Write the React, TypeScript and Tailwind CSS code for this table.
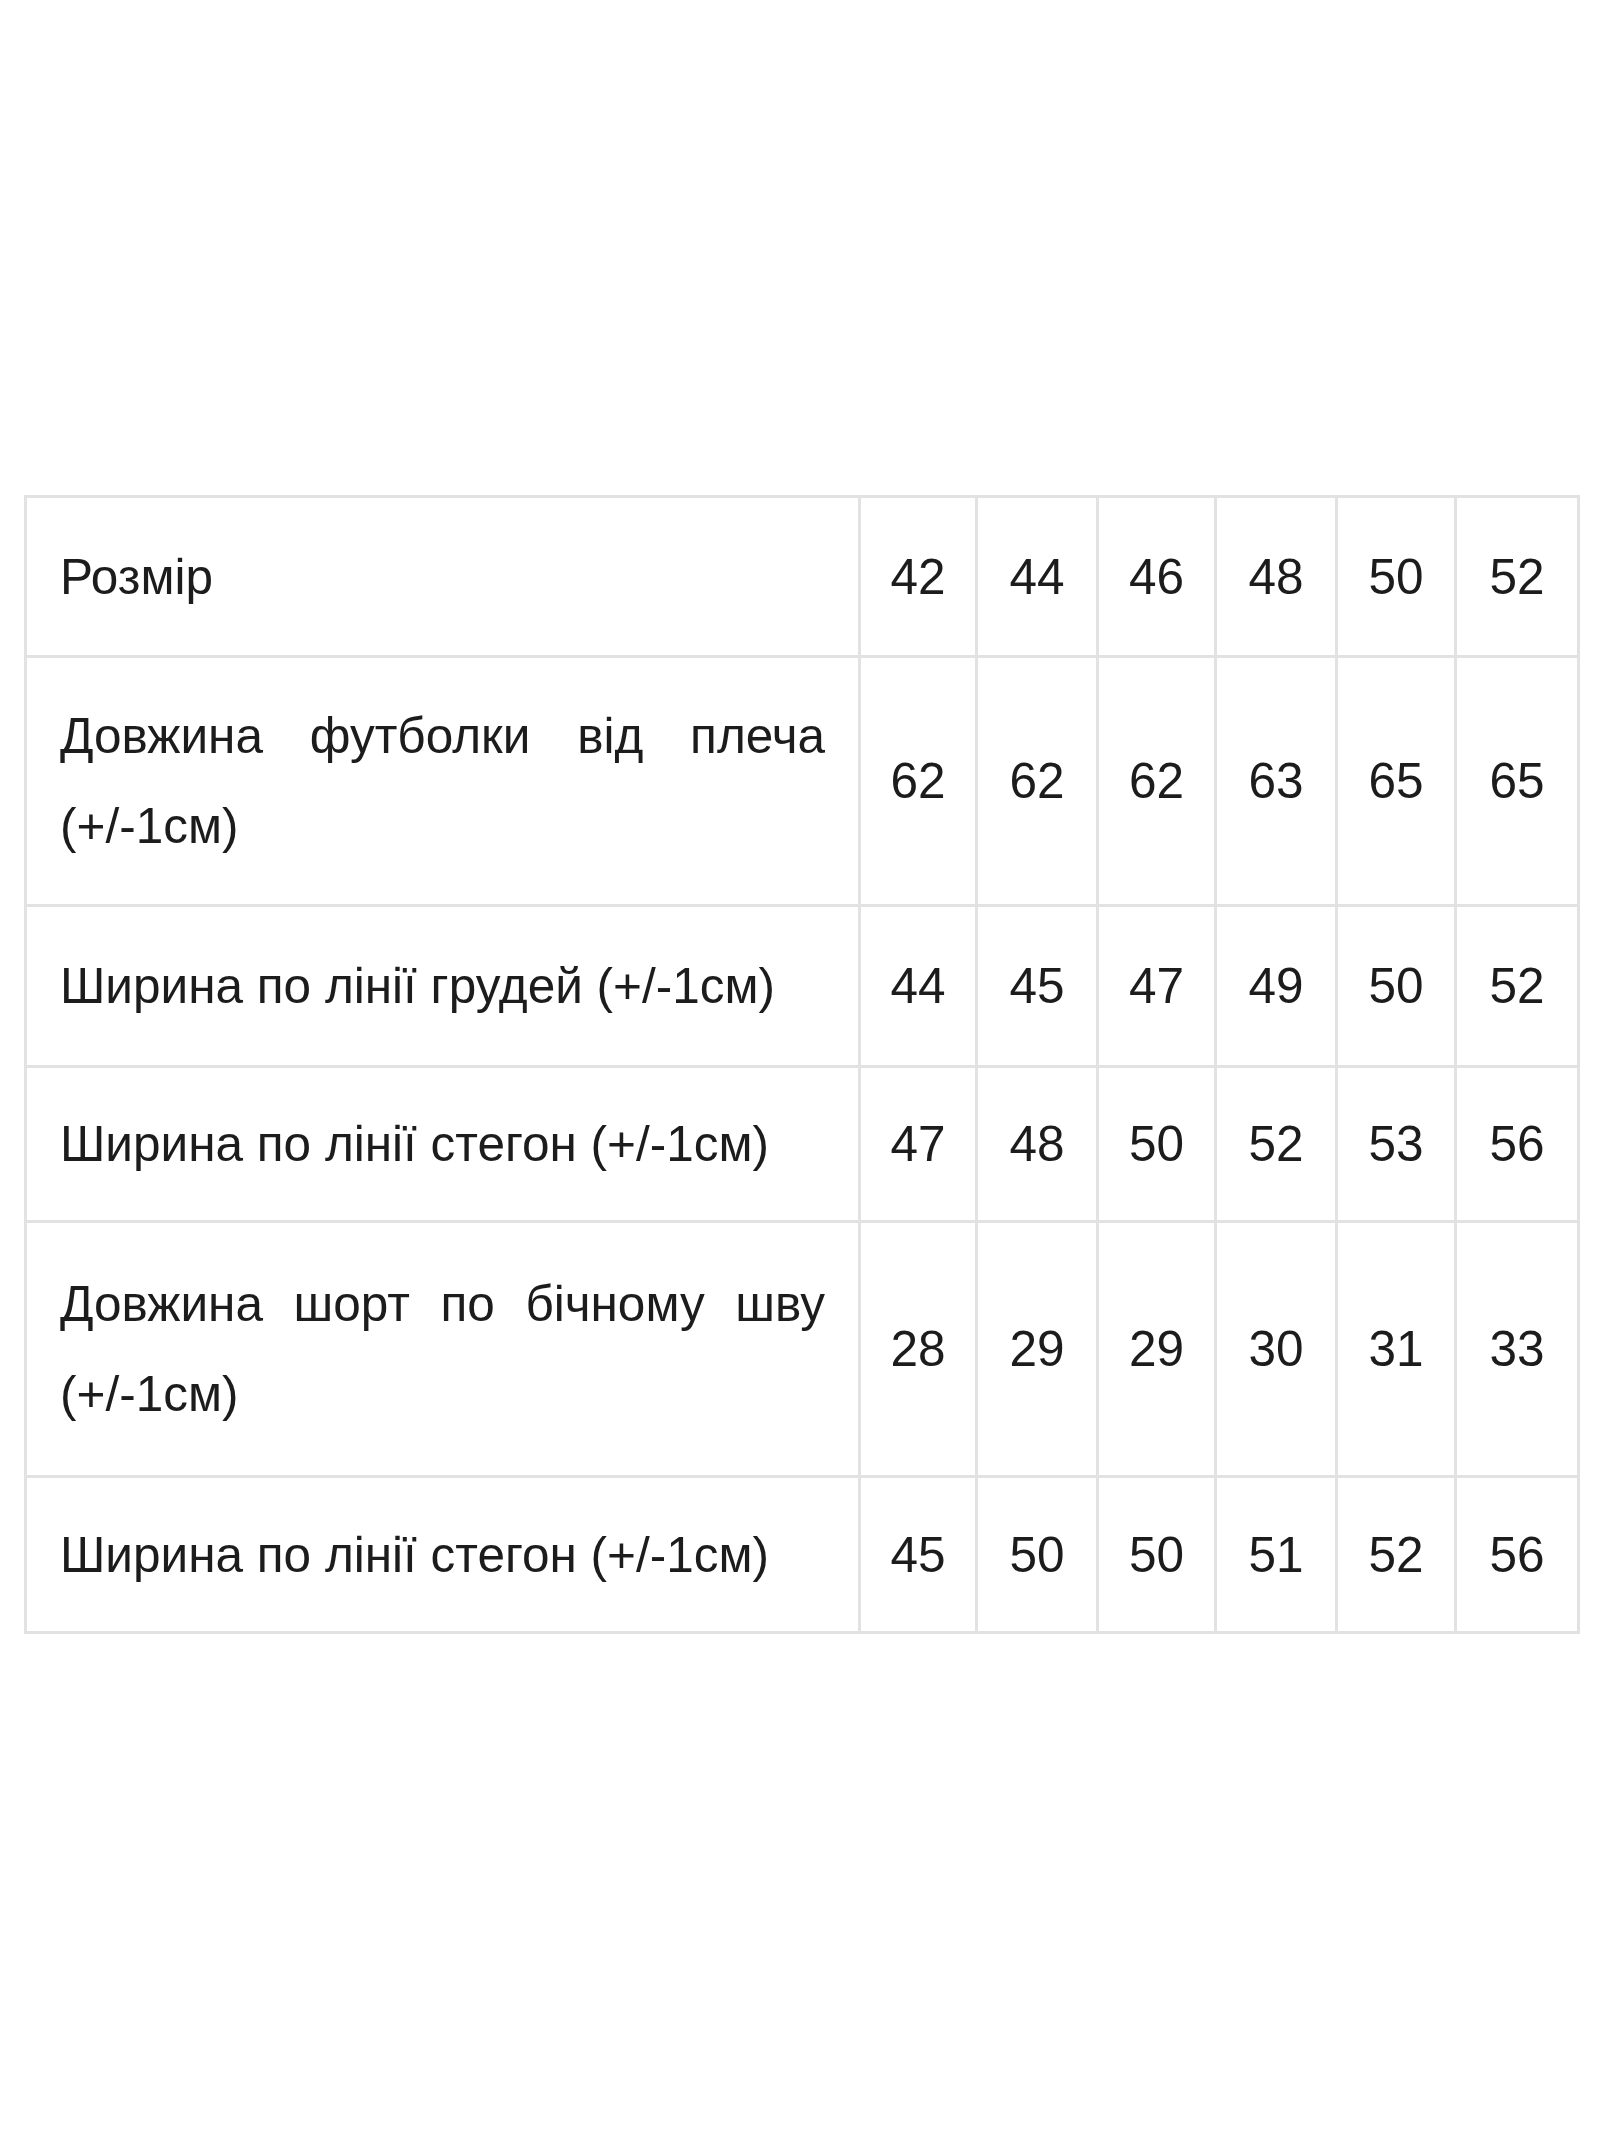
import React from "react";

const rows: { label: string; values: string[]; h: string }[] = [
  { label: "Розмір", values: ["42", "44", "46", "48", "50", "52"], h: "h-[160px]" },
  { label: "Довжина футболки від плеча (+/-1см)", values: ["62", "62", "62", "63", "65", "65"], h: "h-[249px]" },
  { label: "Ширина по лінії грудей (+/-1см)", values: ["44", "45", "47", "49", "50", "52"], h: "h-[161px]" },
  { label: "Ширина по лінії стегон (+/-1см)", values: ["47", "48", "50", "52", "53", "56"], h: "h-[155px]" },
  { label: "Довжина шорт по бічному шву (+/-1см)", values: ["28", "29", "29", "30", "31", "33"], h: "h-[255px]" },
  { label: "Ширина по лінії стегон (+/-1см)", values: ["45", "50", "50", "51", "52", "56"], h: "h-[156px]" },
];

export default function App() {
  return (
    <div className="w-[1599px] h-[2133px] bg-white pt-[495px] pl-[24px] [font-family:'Liberation_Sans',Arial,sans-serif] text-[#1c1c1c]">
      <table className="border-collapse table-fixed w-[1553px] text-[49.5px] leading-[90px]">
        <colgroup>
          <col className="w-[834px]" />
          <col className="w-[117px]" />
          <col className="w-[121px]" />
          <col className="w-[118px]" />
          <col className="w-[121px]" />
          <col className="w-[119px]" />
          <col className="w-[123px]" />
        </colgroup>
        <tbody>
          {rows.map((r, i) => (
            <tr key={i} className={r.h}>
              <td className="border-[3px] border-[#e2e2e2] px-[33px] py-0 text-justify align-middle">
                {r.label}
              </td>
              {r.values.map((v, j) => (
                <td key={j} className="border-[3px] border-[#e2e2e2] p-0 text-center align-middle">
                  {v}
                </td>
              ))}
            </tr>
          ))}
        </tbody>
      </table>
    </div>
  );
}
